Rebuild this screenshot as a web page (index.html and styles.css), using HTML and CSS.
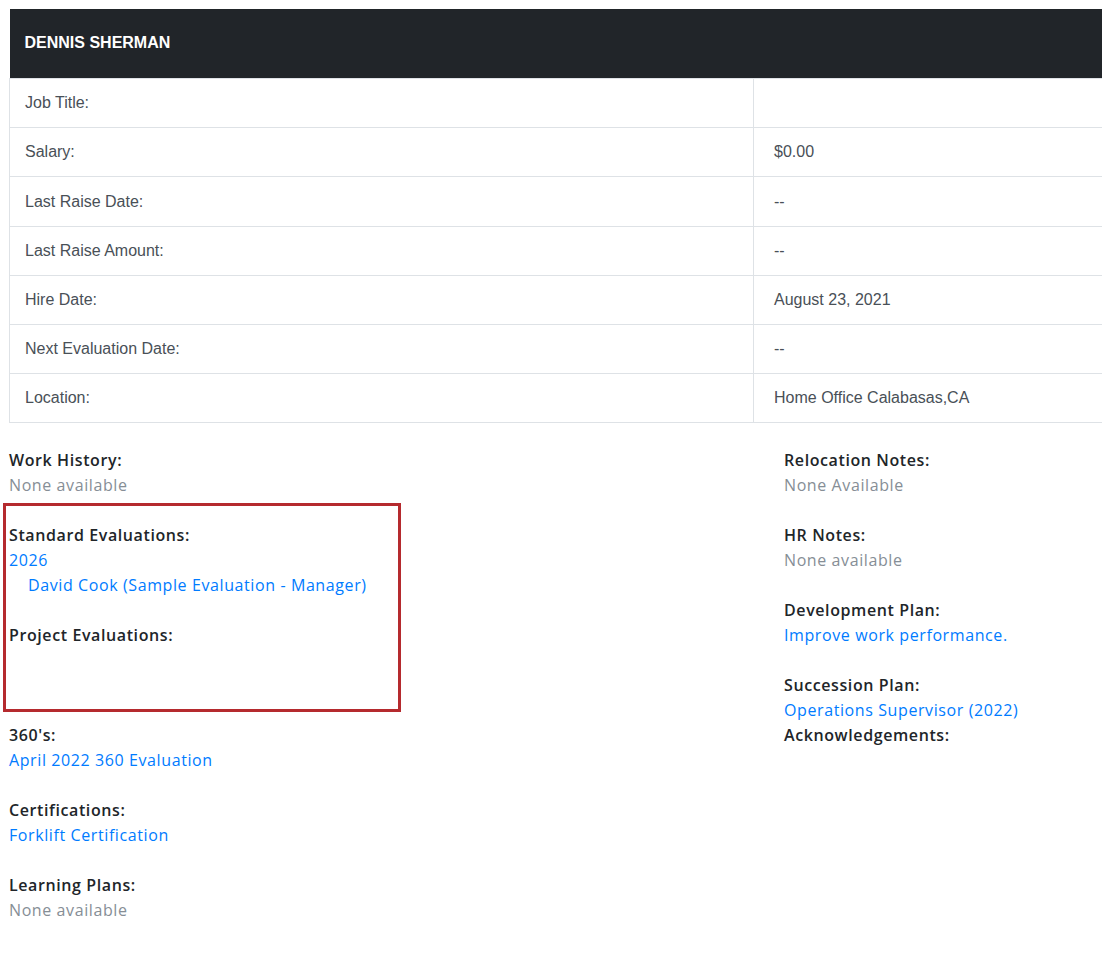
FILE: index.html
```html
<!DOCTYPE html>
<html lang="en">
<head>
    <meta charset="UTF-8">
    <title>Dennis Sherman</title>
    <link rel="stylesheet" href="styles.css">
</head>
<body>
    <table class="info">
        <thead>
            <tr><th colspan="2">DENNIS SHERMAN</th></tr>
        </thead>
        <tbody>
            <tr><td class="key">Job Title:</td><td></td></tr>
            <tr><td class="key">Salary:</td><td>$0.00</td></tr>
            <tr><td class="key">Last Raise Date:</td><td>--</td></tr>
            <tr><td class="key">Last Raise Amount:</td><td>--</td></tr>
            <tr><td class="key">Hire Date:</td><td>August 23, 2021</td></tr>
            <tr><td class="key">Next Evaluation Date:</td><td>--</td></tr>
            <tr><td class="key">Location:</td><td>Home Office Calabasas,CA</td></tr>
        </tbody>
    </table>

    <div class="details">
        <div class="col left">
            <div class="block">
                <div class="label">Work History:</div>
                <div class="none">None available</div>
            </div>
            <div class="highlight">
                <div class="block">
                    <div class="label">Standard Evaluations:</div>
                    <a href="#">2026</a>
                    <a href="#" class="sub">David Cook (Sample Evaluation - Manager)</a>
                </div>
                <div class="block">
                    <div class="label">Project Evaluations:</div>
                </div>
            </div>
            <div class="block">
                <div class="label">360's:</div>
                <a href="#">April 2022 360 Evaluation</a>
            </div>
            <div class="block">
                <div class="label">Certifications:</div>
                <a href="#">Forklift Certification</a>
            </div>
            <div class="block">
                <div class="label">Learning Plans:</div>
                <div class="none">None available</div>
            </div>
        </div>
        <div class="col right">
            <div class="block">
                <div class="label">Relocation Notes:</div>
                <div class="none">None Available</div>
            </div>
            <div class="block">
                <div class="label">HR Notes:</div>
                <div class="none">None available</div>
            </div>
            <div class="block">
                <div class="label">Development Plan:</div>
                <a href="#">Improve work performance.</a>
            </div>
            <div class="block tight">
                <div class="label">Succession Plan:</div>
                <a href="#">Operations Supervisor (2022)</a>
            </div>
            <div class="block">
                <div class="label">Acknowledgements:</div>
            </div>
        </div>
    </div>
</body>
</html>
```

FILE: styles.css
```css
body{
    margin: 0;
    padding: 9px;
    overflow-x: hidden;
    font-family: "Open Sans", sans-serif;
    color: #212529;
}

.info{
    width: 1130px;
    border-collapse: collapse;
    font-family: "Liberation Sans", Arial, sans-serif;
    font-size: 16px;
}
.info th{
    background: #212529;
    color: white;
    text-align: left;
    font-weight: bold;
    height: 69px;
    padding: 0 15px;
    box-sizing: border-box;
}
.info td{
    border: 1px solid #dee2e6;
    color: #495057;
    height: 49px;
    padding: 1px 15px 0;
    box-sizing: border-box;
    line-height: 24px;
}
.info tbody tr:nth-child(3) td{
    height: 50px;
}
.info td.key{
    width: 744px;
}
.info td:last-child{
    padding-left: 20px;
}

.details{
    display: flex;
    margin-top: 25px;
    font-size: 16px;
    line-height: 25px;
    letter-spacing: 0.6px;
}
.col.left{
    width: 775px;
}
.block{
    margin-bottom: 25px;
}
.block.tight{
    margin-bottom: 0;
}
.label{
    font-weight: 600;
    color: #212529;
}
.none{
    color: #868e96;
}
a{
    display: block;
    color: #007bff;
    text-decoration: none;
}
a.sub{
    padding-left: 19px;
}

/* 평가 영역 강조 박스 */
.highlight{
    border: 3px solid #b52a2e;
    margin: -20px 0 11px -6px;
    padding: 17px 0 0 3px;
    width: 389px;
    height: 186px;
}
.highlight .block:last-child{
    margin-bottom: 0;
}
```
